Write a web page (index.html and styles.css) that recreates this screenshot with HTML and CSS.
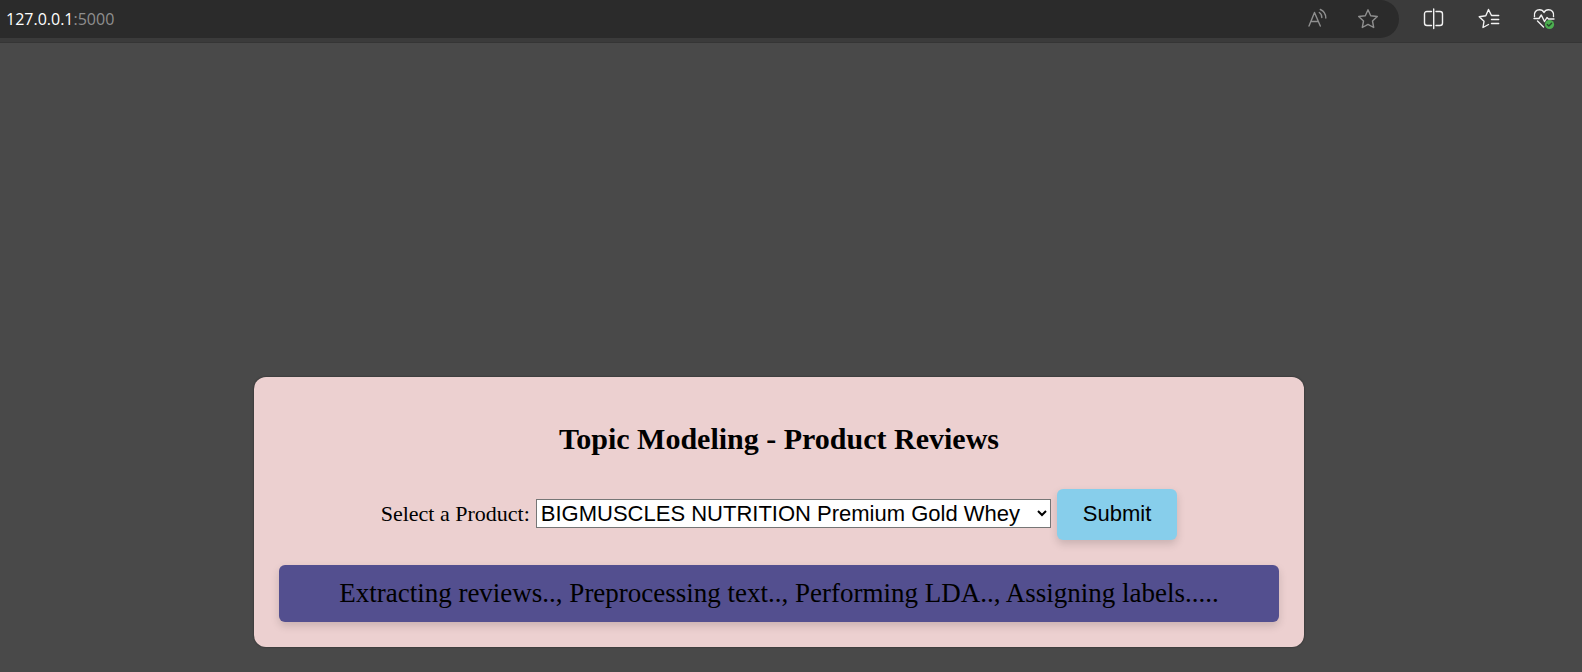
FILE: index.html
```html
<!DOCTYPE html>
<html lang="en">
<head>
<meta charset="utf-8">
<title>Topic Modeling - Product Reviews</title>
<link rel="stylesheet" href="styles.css">
</head>
<body>
<header class="toolbar">
  <div class="address">
    <a class="url" href="#">127.0.0.1<span class="port">:5000</span></a>
    <button class="icon-btn dim" aria-label="Read aloud">
      <svg width="22" height="22" viewBox="0 0 22 22"><path d="M2 18 7.500 4.500 13.300 18M4 13.500H11.300M12.300 4.500Q14.800 6 14.800 9.500M13.300 1.500Q18.800 4 18.800 10"/></svg>
    </button>
    <button class="icon-btn dim" aria-label="Add to favorites">
      <svg width="22" height="22" viewBox="0 0 22 22"><path d="M11 1.800 13.700 7.700 20.300 8.500 15.500 13 16.700 19.500 11 16.400 5.300 19.500 6.500 13 1.700 8.500 8.300 7.700Z"/></svg>
    </button>
  </div>
  <nav class="actions">
    <button class="icon-btn" aria-label="Split screen">
      <svg width="22" height="22" viewBox="0 0 22 22"><path d="M8.500 3.500H4Q1.500 3.500 1.500 6V15Q1.500 17.500 4 17.500H8.500M13 3.500H17Q19.500 3.500 19.500 6V15Q19.500 17.500 17 17.500H13M10.700 1V20.500"/></svg>
    </button>
    <button class="icon-btn" aria-label="Favorites">
      <svg width="22" height="22" viewBox="0 0 22 22"><path d="M10.500 16.500 5 19.500 6 13.300 1.200 8.700 7.800 7.700 10.500 1.500 13.500 7.500H20.700M13.500 11.500H20.700M13.500 15.500H20.700"/></svg>
    </button>
    <button class="icon-btn" aria-label="Browser essentials">
      <svg width="22" height="22" viewBox="0 0 22 22"><path d="M1.500 8.500C.5 4 3.500 1.800 6.500 1.800 9 1.800 10.500 3.500 11 4.500 11.500 3.500 13 1.800 15.500 1.800 18.500 1.800 21.500 4 20.500 8.500M1 10.500H6L8.300 7 11.500 13.500 14 9.500 15.500 11H21M4.500 13 10.500 19"/><circle class="badge" cx="16.500" cy="16.500" r="4.600"/><path class="tick" d="M14.300 16.600 15.800 18 18.600 15.200"/></svg>
    </button>
  </nav>
</header>
<main class="page">
  <section class="card">
    <h2 class="title">Topic Modeling - Product Reviews</h2>
    <form class="picker">
      <label for="product">Select a Product:</label>
      <select class="product" id="product">
        <option>BIGMUSCLES NUTRITION Premium Gold Whey</option>
      </select>
      <button class="submit" type="button">Submit</button>
    </form>
    <p class="status">Extracting reviews.., Preprocessing text.., Performing LDA.., Assigning labels.....</p>
  </section>
</main>
</body>
</html>
```
FILE: styles.css
```css
* {
  box-sizing: border-box;
}

body {
  margin: 0;
  min-height: 100vh;
  display: flex;
  flex-direction: column;
  background: #494949;
  color: #000;
  font-family: "Liberation Serif", "Times New Roman", serif;
}

.toolbar {
  display: flex;
  align-items: flex-start;
  background: #3b3b3b;
  border-bottom: 1px solid #353535;
  padding-bottom: 4px;
}

.address {
  flex: 1;
  display: flex;
  align-items: center;
  gap: 28px;
  height: 38px;
  padding: 0 20px 0 6px;
  background: #2b2b2b;
  border-radius: 0 19px 19px 0;
}

.url {
  flex: 1;
  color: #fff;
  font: 16px "Open Sans", "Noto Sans", sans-serif;
  text-decoration: none;
}

.port {
  color: #8f8f8f;
}

.actions {
  display: flex;
  align-items: center;
  gap: 33px;
  height: 38px;
  padding: 0 27px 0 24px;
}

.icon-btn {
  display: flex;
  padding: 0;
  border: 0;
  background: none;
  color: #f2f2f2;
}

.dim {
  color: #8f8f8f;
}

.icon-btn svg {
  fill: none;
  stroke: currentColor;
  stroke-width: 1.4;
  stroke-linejoin: round;
  stroke-linecap: round;
}

.icon-btn .badge {
  fill: #4caf50;
  stroke: none;
}

.icon-btn .tick {
  stroke: #26482a;
}

.page {
  flex: 1;
  display: flex;
  justify-content: center;
  align-items: flex-end;
  padding: 24px 24px 25px 0;
}

.card {
  width: 1050px;
  max-width: 100%;
  padding: 25px;
  border-radius: 12px;
  background: #ecd0d0;
  box-shadow: 0 0 2px rgba(0, 0, 0, 0.5);
  text-align: center;
}

.title {
  margin: 20px 0 33px;
  font-size: 30px;
  line-height: 34px;
}

.picker {
  display: flex;
  flex-wrap: wrap;
  justify-content: center;
  align-items: baseline;
  gap: 6px;
  margin-bottom: 25px;
  font-size: 22px;
}

.product {
  width: 515px;
  height: 29px;
  padding: 0;
  border: 1px solid #767676;
  border-radius: 0;
  background: #fff;
  color: #000;
  font: 22px "Liberation Sans", Arial, sans-serif;
}

.submit {
  padding: 11px 26px 13px;
  border: 0;
  border-radius: 6px;
  background: #87ceeb;
  box-shadow: 0 4px 8px rgba(0, 0, 0, 0.15);
  color: #000;
  font: 22px/27px "Liberation Sans", Arial, sans-serif;
}

.status {
  margin: 0;
  padding: 12px;
  border-radius: 6px;
  background: #534f8f;
  box-shadow: 0 4px 8px rgba(0, 0, 0, 0.15);
  font-size: 27px;
  line-height: 33px;
}
```
